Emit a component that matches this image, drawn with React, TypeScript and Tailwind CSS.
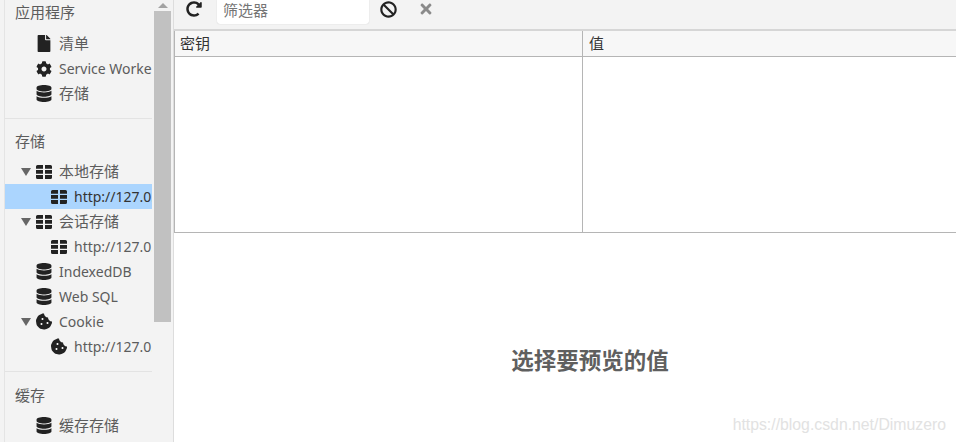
import type { ReactNode } from "react";
import { FaBan, FaCog, FaCookieBite, FaDatabase, FaFile, FaRedoAlt, FaTimes } from "react-icons/fa";

const font = "font-['Noto_Sans','Noto_Sans_CJK_SC',sans-serif]";

function GridIcon() {
  return (
    <svg width="16" height="14" viewBox="0 0 16 14" fill="currentColor">
      <path d="M0 1.500A1.500 1.500 0 0 1 1.500 0H7v3.800H0zM9 0h5.500A1.500 1.500 0 0 1 16 1.500v2.300H9zM0 5h7v3.800H0zM9 5h7v3.800H9zM0 10h7v4H1.500A1.500 1.500 0 0 1 0 12.500zM9 10h7v2.500a1.500 1.500 0 0 1-1.500 1.500H9z" />
    </svg>
  );
}

function Row({
  icon,
  label,
  depth = 0,
  arrow,
  selected,
}: {
  icon: ReactNode;
  label: string;
  depth?: number;
  arrow?: boolean;
  selected?: boolean;
}) {
  // Chinese labels render a touch larger than the latin ones in the reference
  const isLatin = /^[\x00-\x7f]+$/.test(label);
  return (
    <div
      className={`flex h-[25px] items-center overflow-hidden whitespace-nowrap ${
        isLatin ? "text-[14px]" : "text-[15px]"
      } ${selected ? "bg-[#abd5fe] text-[#333]" : "text-[#5c5c5c]"} ${depth === 1 ? "pl-[46px]" : "pl-[16px]"}`}
    >
      {depth === 0 && (
        <span className="flex w-[15px] shrink-0 items-center">
          {arrow && <span className="h-0 w-0 border-x-[5px] border-t-[8px] border-x-transparent border-t-[#666]" />}
        </span>
      )}
      <span className="mr-[7px] flex w-[16px] shrink-0 items-center justify-center text-[#222]">{icon}</span>
      <span>{label}</span>
    </div>
  );
}

const db = <FaDatabase size={17} />;
const grid = <GridIcon />;
const cookie = <FaCookieBite size={17} />;

export default function App() {
  return (
    <div className={`flex h-[442px] w-[956px] overflow-hidden bg-white ${font}`}>
      {/* Sidebar */}
      <aside className="flex h-full w-[174px] shrink-0 border-r border-[#ddd] bg-[#f3f3f3] pl-[4px]">
        <div className="w-[148px] shrink-0 border-l border-[#e4e4e4]">
          <div className="flex h-[31px] items-start pl-[10px] pt-[2px] text-[15px] leading-[21px] text-[#5c5c5c]">应用程序</div>
          <Row icon={<FaFile size={17} />} label="清单" />
          <Row icon={<FaCog size={18} />} label="Service Workers" />
          <Row icon={db} label="存储" />
          <div className="mt-[12px] border-t border-[#e3e3e3]" />
          <div className="flex h-[40px] items-start pl-[10px] pt-[12px] text-[15px] leading-[21px] text-[#5c5c5c]">存储</div>
          <Row arrow icon={grid} label="本地存储" />
          <Row depth={1} selected icon={grid} label="http://127.0.0.1" />
          <Row arrow icon={grid} label="会话存储" />
          <Row depth={1} icon={grid} label="http://127.0.0.1" />
          <Row icon={db} label="IndexedDB" />
          <Row icon={db} label="Web SQL" />
          <Row arrow icon={cookie} label="Cookie" />
          <Row depth={1} icon={cookie} label="http://127.0.0.1" />
          <div className="mt-[12px] border-t border-[#e3e3e3]" />
          <div className="flex h-[41px] items-start pl-[10px] pt-[13px] text-[15px] leading-[21px] text-[#5c5c5c]">缓存</div>
          <Row icon={db} label="缓存存储" />
        </div>
        {/* Scrollbar */}
        <div className="ml-[2px] flex w-[17px] shrink-0 flex-col items-center">
          <div className="flex h-[11px] w-full items-center justify-center">
            <span className="h-0 w-0 border-x-[5px] border-b-[5px] border-x-transparent border-b-[#a3a3a3]" />
          </div>
          <div className="h-[311px] w-full bg-[#c1c1c1]" />
        </div>
      </aside>

      {/* Main */}
      <main className="relative flex min-w-0 flex-1 flex-col">
        <div className="flex h-[31px] shrink-0 items-start border-b-2 border-[#d6d6d6] bg-[#f3f3f3]">
          <FaRedoAlt size={16} className="ml-[12px] mt-[1px] text-[#222]" />
          <div className="ml-[15px] flex h-[24px] w-[152px] items-center rounded-b-[3px] bg-white pb-[4px] pl-[6px] text-[15px] text-[#757575] shadow-[0_0_1px_#bbb]">
            筛选器
          </div>
          <FaBan size={17} className="ml-[11px] mt-[1px] text-[#222]" />
          <FaTimes size={16} className="ml-[21px] mt-[1px] text-[#8a8a8a]" />
        </div>

        <div className="h-[202px] shrink-0 border-b border-l border-[#b5b5b5] text-[15px] text-[#333]">
          <div className="flex h-[26px] border-b border-[#b5b5b5] bg-[#f7f7f7]">
            <div className="flex w-[408px] items-center border-r border-[#b5b5b5] pl-[5px]">密钥</div>
            <div className="flex items-center pl-[6px]">值</div>
          </div>
          <div className="h-[175px] w-[408px] border-r border-[#b5b5b5]" />
        </div>

        <div className="flex flex-1 items-center justify-center pt-[46px]">
          <span className="mr-[-50px] text-[22.5px] font-bold text-[#5f5f5f]">选择要预览的值</span>
        </div>

        <span className="absolute bottom-[5px] right-[10px] font-['Liberation_Sans',sans-serif] text-[15.8px] text-[#e2e2e2]">
          https://blog.csdn.net/Dimuzero
        </span>
      </main>
    </div>
  );
}
